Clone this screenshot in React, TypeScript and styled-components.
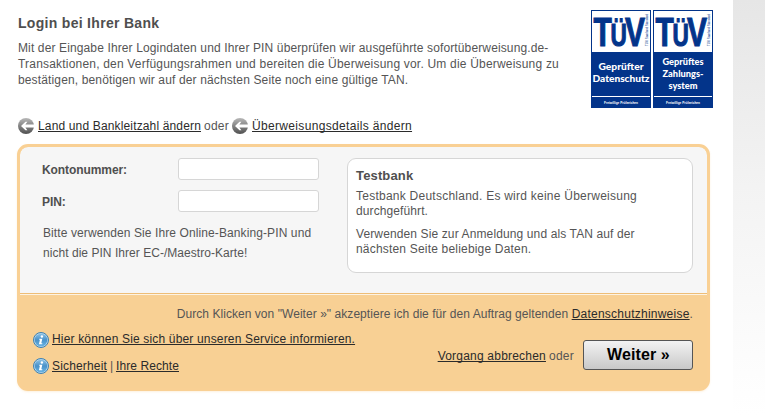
import React from 'react';
import styled, { createGlobalStyle } from 'styled-components';

const Global = createGlobalStyle`
  * { box-sizing: border-box; }
  html, body { margin: 0; padding: 0; background: #fff; }
  body { font-family: "Liberation Sans", Arial, sans-serif; font-size: 12px; color: #555; overflow: hidden; }
`;

const Page = styled.div`
  display: flex;
  width: 765px;
  height: 415px;
`;
const Content = styled.main`
  width: 733px;
  padding: 10px 20px 0 17px;
`;
const Gutter = styled.aside`
  flex: 1;
  background: linear-gradient(#e6e6e6, #f3f3f3 45%, #fdfdfd 90%, #fff);
`;
const Header = styled.header`
  display: flex;
  justify-content: space-between;
  height: 108px;
  padding-left: 1px;
`;
const Intro = styled.div`
  padding-top: 5px;
`;
const Title = styled.h1`
  margin: 0 0 9px;
  font-size: 14px;
  line-height: 16px;
  letter-spacing: 0.3px;
  color: #4f4f4f;
`;
const Line = styled.span<{ $track?: number; $lh?: number }>`
  display: block;
  white-space: nowrap;
  line-height: ${(p) => p.$lh ?? 16}px;
  letter-spacing: ${(p) => p.$track ?? 0}px;
`;
const Badges = styled.div`
  display: flex;
  gap: 2px;
`;
const Link = styled.a<{ $track?: number }>`
  color: #2b2b2b;
  text-decoration: underline;
  text-decoration-thickness: 1px;
  text-underline-offset: 1px;
  text-decoration-skip-ink: none;
  letter-spacing: ${(p) => p.$track ?? 0}px;
  white-space: nowrap;
`;
const BackLinks = styled.nav`
  display: flex;
  height: 16px;
  line-height: 16px;
  padding-left: 1px;
  margin-bottom: 10px;
  svg { margin-right: 4px; }
`;
const Or = styled.span`
  padding: 0 3px;
  letter-spacing: 0.25px;
`;
const Panel = styled.section`
  width: 693px;
  height: 247px;
  border: 3px solid #f9d094;
  border-radius: 11px;
  background: #f8d094;
  overflow: hidden;
  box-shadow: 0 1px 2px rgba(248, 208, 148, 0.3);
`;
const Form = styled.form`
  display: flex;
  justify-content: space-between;
  height: 146px;
  padding: 11px 14px 0 22px;
  border-radius: 8px 8px 0 0;
  background: #f6f6f6;
`;
const Rule = styled.div`
  height: 2px;
  border-top: 1px solid #eebd77;
  background: #fdf3e3;
`;
const Fields = styled.div`
  width: 277px;
`;
const Field = styled.label`
  display: flex;
  justify-content: space-between;
  height: 22px;
  margin-bottom: 10px;
  line-height: 24px;
  font-weight: bold;
  letter-spacing: -0.08px;
  color: #4f4f4f;
`;
const Input = styled.input`
  width: 141px;
  height: 22px;
  padding: 0 4px;
  border: 1px solid #d6d6d6;
  border-radius: 3px;
  background: #fff;
`;
const Hint = styled.p`
  margin: 0;
  padding: 1px 0 0 1px;
`;
const BankBox = styled.div`
  width: 346px;
  height: 115px;
  padding: 9px 8px;
  border: 1px solid #d6d6d6;
  border-radius: 9px;
  background: #fff;
`;
const BankName = styled.h2`
  margin: 0 0 6px;
  font-size: 13px;
  line-height: 15px;
  letter-spacing: 0.15px;
  color: #4f4f4f;
`;
const Para = styled.p`
  margin: 0 0 8px;
`;
const Footer = styled.footer`
  padding: 11px 14px 0 13px;
`;
const Consent = styled.p`
  display: flex;
  justify-content: flex-end;
  margin: 0 0 9px;
  line-height: 16px;
  white-space: pre;
  letter-spacing: 0.05px;
`;
const Actions = styled.div`
  display: flex;
  justify-content: space-between;
`;
const InfoList = styled.div`
  display: flex;
  flex-direction: column;
  gap: 11px;
`;
const InfoRow = styled.div<{ $drop?: number }>`
  display: flex;
  height: 16px;
  line-height: 16px;
  svg { margin: ${(p) => p.$drop ?? 0}px 3px 0 0; }
`;
const Pipe = styled.span`
  width: 9px;
  text-align: center;
`;
const Submit = styled.div`
  display: flex;
  padding-top: 9px;
  line-height: 32px;
`;
const Button = styled.button`
  width: 110px;
  height: 30px;
  margin-left: 6px;
  padding: 0 0 0 1px;
  border: 1px solid #555;
  border-radius: 3px;
  background: linear-gradient(#f3f3f3, #c9c9c9);
  color: #000;
  font: bold 16px/28px "Liberation Sans", Arial, sans-serif;
  letter-spacing: 0.1px;
`;
const Icon = styled.svg`
  display: block;
  flex: none;
  overflow: visible;
`;

function BackIcon() {
  return (
    <Icon width="16" height="16" viewBox="0 0 16 16">
      <defs>
        <linearGradient id="back" x1="0" y1="0" x2="0" y2="1">
          <stop offset="0" stopColor="#b8b8b8" />
          <stop offset="1" stopColor="#505050" />
        </linearGradient>
      </defs>
      <circle cx="8" cy="8" r="8" fill="url(#back)" />
      <path d="M3 8 7.5 3.8H9.4L7.4 6.6H16V9.6H7.4L9.4 12.2H7.5Z" fill="#fff" />
    </Icon>
  );
}

function InfoIcon() {
  return (
    <Icon width="16" height="16" viewBox="0 0 16 16">
      <defs>
        <linearGradient id="info" x1="0" y1="0" x2="0" y2="1">
          <stop offset="0" stopColor="#8ac0e4" />
          <stop offset="0.5" stopColor="#4a92c9" />
          <stop offset="1" stopColor="#66b2e2" />
        </linearGradient>
      </defs>
      <circle cx="8" cy="8" r="7.5" fill="#b5d7ee" stroke="#3f81b0" />
      <circle cx="8" cy="8" r="6.3" fill="url(#info)" />
      <circle cx="8.9" cy="4.5" r="1.2" fill="#fff" />
      <path d="M6.3 6.7h3l-1 4.5h1.1l-.2 1H5.9l1-4.5h-.8z" fill="#fff" />
    </Icon>
  );
}

type BadgeLine = [text: string, baseline: number, width: number];

function Badge({ lines }: { lines: BadgeLine[] }) {
  return (
    <Icon width="60" height="98" viewBox="0 0 60 98">
      <rect width="60" height="98" fill="#03348a" />
      <rect x="1" y="1" width="58" height="41" fill="#fff" />
      <text
        transform="translate(2.6 35.6) scale(0.73 1)"
        fontFamily="Liberation Sans"
        fontWeight="bold"
        fontSize="41"
        fill="#03348a"
        stroke="#03348a"
        strokeWidth="1.1"
      >
        T<tspan dx="-2" fontSize="31">Ü</tspan><tspan dx="-2.5">V</tspan>
      </text>
      <text
        transform="translate(57.2 36) rotate(-90)"
        fontFamily="Liberation Sans"
        fontSize="3.8"
        fill="#03348a"
        textLength="32"
        lengthAdjust="spacingAndGlyphs"
      >
        TÜV Saarland Standard
      </text>
      {lines.map(([text, baseline, width]) => (
        <text
          key={text}
          x={30 - width / 2}
          y={baseline}
          fontFamily="Lato"
          fontWeight="900"
          fontSize="10"
          fill="#fff"
          textLength={width}
          lengthAdjust="spacingAndGlyphs"
        >
          {text}
        </text>
      ))}
      <rect x="1" y="86" width="58" height="1" fill="#fff" />
      <text
        x="13"
        y="94"
        fontFamily="Liberation Sans"
        fontWeight="bold"
        fontSize="4.3"
        fill="#fff"
        textLength="34"
        lengthAdjust="spacingAndGlyphs"
      >
        Freiwillige Prüfzeichen
      </text>
    </Icon>
  );
}

export default function App() {
  return (
    <Page>
      <Global />
      <Content>
        <Header>
          <Intro>
            <Title>Login bei Ihrer Bank</Title>
            <Line $track={0.128}>
              Mit der Eingabe Ihrer Logindaten und Ihrer PIN überprüfen wir ausgeführte sofortüberweisung.de-
            </Line>
            <Line $track={0.195}>
              Transaktionen, den Verfügungsrahmen und bereiten die Überweisung vor. Um die Überweisung zu
            </Line>
            <Line $track={0.138}>bestätigen, benötigen wir auf der nächsten Seite noch eine gültige TAN.</Line>
          </Intro>
          <Badges>
            <Badge lines={[['Geprüfter', 60, 45], ['Datenschutz', 72, 57]]} />
            <Badge lines={[['Geprüftes', 55, 41], ['Zahlungs-', 67, 41], ['system', 79, 29]]} />
          </Badges>
        </Header>
        <BackLinks>
          <BackIcon />
          <Link $track={0.15}>Land und Bankleitzahl ändern</Link>
          <Or>oder</Or>
          <BackIcon />
          <Link $track={0.33}>Überweisungsdetails ändern</Link>
        </BackLinks>
        <Panel>
          <Form>
            <Fields>
              <Field>
                Kontonummer:
                <Input type="text" />
              </Field>
              <Field>
                PIN:
                <Input type="password" />
              </Field>
              <Hint>
                <Line $lh={20} $track={0.1}>Bitte verwenden Sie Ihre Online-Banking-PIN und</Line>
                <Line $lh={20} $track={0.04}>nicht die PIN Ihrer EC-/Maestro-Karte!</Line>
              </Hint>
            </Fields>
            <BankBox>
              <BankName>Testbank</BankName>
              <Para>
                <Line $lh={15} $track={0.245}>Testbank Deutschland. Es wird keine Überweisung</Line>
                <Line $lh={15} $track={0.1}>durchgeführt.</Line>
              </Para>
              <Para>
                <Line $lh={15} $track={0.12}>Verwenden Sie zur Anmeldung und als TAN auf der</Line>
                <Line $lh={15} $track={0.19}>nächsten Seite beliebige Daten.</Line>
              </Para>
            </BankBox>
          </Form>
          <Rule />
          <Footer>
            <Consent>
              {'Durch Klicken von "Weiter »" akzeptiere ich die für den Auftrag geltenden '}
              <Link $track={0.24}>Datenschutzhinweise</Link>.
            </Consent>
            <Actions>
              <InfoList>
                <InfoRow $drop={1}>
                  <InfoIcon />
                  <Link $track={0.165}>Hier können Sie sich über unseren Service informieren.</Link>
                </InfoRow>
                <InfoRow>
                  <InfoIcon />
                  <Link $track={0.16}>Sicherheit</Link>
                  <Pipe>|</Pipe>
                  <Link $track={0.09}>Ihre Rechte</Link>
                </InfoRow>
              </InfoList>
              <Submit>
                <Link $track={0.21}>Vorgang abbrechen</Link>
                <Or>oder</Or>
                <Button type="button">Weiter »</Button>
              </Submit>
            </Actions>
          </Footer>
        </Panel>
      </Content>
      <Gutter />
    </Page>
  );
}
